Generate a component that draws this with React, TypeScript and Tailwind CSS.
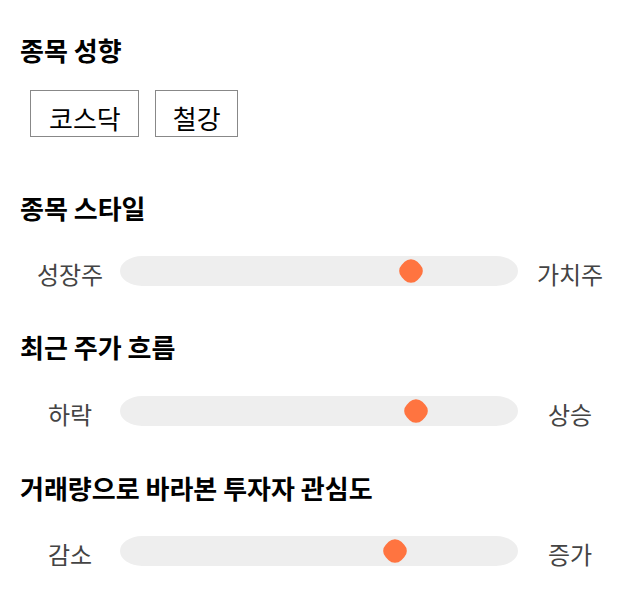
import React from "react";

const font = { fontFamily: '"Noto Sans CJK KR", "Noto Sans", sans-serif' };

function Slider({ left, right, center }: { left: string; right: string; center: number }) {
  return (
    <div className="flex h-[30px] items-center">
      <div className="w-[100px] shrink-0 pt-[6px] text-center text-[24px] leading-[30px] text-[#444]">{left}</div>
      <div className="relative h-[30px] w-[398px] shrink-0 rounded-[22px/15px] bg-[#eeeeee]">
        <div
          className="absolute top-[4px] h-[22px] w-[22px] rotate-45 rounded-[9px] bg-[#ff7440]"
          style={{ left: center - 11 }}
        />
      </div>
      <div className="w-[104px] shrink-0 pt-[6px] text-center text-[24px] leading-[30px] text-[#444]">{right}</div>
    </div>
  );
}

export default function App() {
  return (
    <div className="h-[606px] w-[640px] bg-white pl-[20px] text-black" style={font}>
      <div className="pt-[34px] text-[26px] font-bold leading-[32px]">종목 성향</div>
      <div className="mt-[24px] flex gap-[16px] pl-[10px]">
        <div className="border border-[#888] pb-[3px] pl-[18px] pr-[17px] pt-[12px] text-[26px] leading-[30px]">코스닥</div>
        <div className="border border-[#888] pb-[3px] pl-[17px] pr-[16px] pt-[12px] text-[26px] leading-[30px]">철강</div>
      </div>
      <div className="mt-[55px] text-[26px] font-bold leading-[32px]">종목 스타일</div>
      <div className="mt-[32px]">
        <Slider left="성장주" right="가치주" center={291} />
      </div>
      <div className="mt-[45px] text-[26px] font-bold leading-[32px]">최근 주가 흐름</div>
      <div className="mt-[33px]">
        <Slider left="하락" right="상승" center={296} />
      </div>
      <div className="mt-[46px] text-[26px] font-bold leading-[32px]">거래량으로 바라본 투자자 관심도</div>
      <div className="mt-[32px]">
        <Slider left="감소" right="증가" center={275} />
      </div>
    </div>
  );
}
